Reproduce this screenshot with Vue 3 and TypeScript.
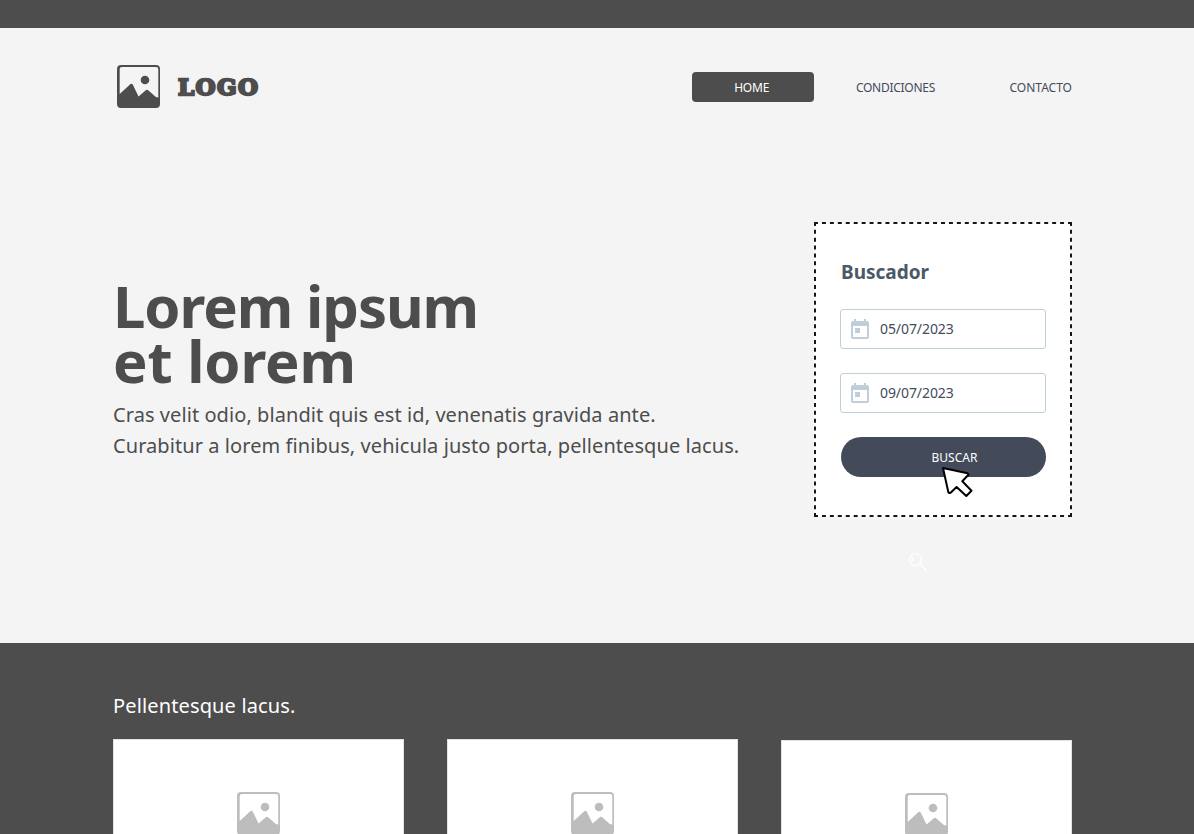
<script setup lang="ts">
interface NavItem { label: string; cls: string }
interface DateField { id: string; value: string }

const nav: NavItem[] = [
  { label: 'HOME', cls: 'home' },
  { label: 'CONDICIONES', cls: 'terms' },
  { label: 'CONTACTO', cls: 'contact' },
]
const dates: DateField[] = [
  { id: 'from', value: '05/07/2023' },
  { id: 'to', value: '09/07/2023' },
]
const cards: number[] = [1, 2, 3]
const picture =
  'M4 0H39Q43 0 43 4V39Q43 43 39 43H4Q0 43 0 39V4Q0 0 4 0ZM5 2Q2.700 2 2.700 4V29L13.500 19Q15 18 16 20L21.500 31.500L28.500 25.500Q30 24 31.500 25.500L38.500 31.700Q39.500 32.500 41.300 32.500V4Q41.300 2 39 2Z'
</script>

<template>
  <div class="page">
    <div class="topbar"></div>
    <section class="hero">
      <header class="header">
        <div class="brand">
          <svg class="picture" viewBox="0 0 43 43"><path :d="picture" fill-rule="evenodd" /><circle cx="28" cy="15" r="4.300" /></svg>
          <span class="brand-name">LOGO</span>
        </div>
        <nav class="nav">
          <a v-for="item in nav" :key="item.label" :class="['nav-item', item.cls]"><span>{{ item.label }}</span></a>
        </nav>
      </header>
      <div class="hero-body">
        <div class="intro">
          <h1><span class="h-one">Lorem ipsum</span><span class="h-two">et lorem</span></h1>
          <p><span>Cras velit odio, blandit quis est id, venenatis gravida ante.</span><span>Curabitur a lorem finibus, vehicula justo porta, pellentesque lacus.</span></p>
        </div>
        <div class="search">
          <svg class="outline" viewBox="0 0 258 295">
            <path class="across" d="M0 1H258M0 294H258" />
            <path class="down" d="M1 0V295M257 0V295" />
          </svg>
          <h2>Buscador</h2>
          <div v-for="d in dates" :key="d.id" class="field">
            <svg class="calendar" viewBox="0 0 18 20"><path fill-rule="evenodd" d="M3 0H5V2H13V0H15V2H16Q18 2 18 4V18Q18 20 16 20H2Q0 20 0 18V4Q0 2 2 2H3ZM2 7V18H16V7ZM4 9H9V14H4Z" /></svg>
            <span>{{ d.value }}</span>
          </div>
          <button class="submit"><span>BUSCAR</span></button>
          <svg class="cursor" viewBox="0 0 32 32"><path d="M2 2L26.500 7.300Q28 8 27 9.300L21.300 15.300L30.500 24.700L25.300 30L15.600 21L9.600 26.700Q8 27.700 7.300 26Z" /></svg>
          <svg class="magnifier" viewBox="0 0 20 20"><circle cx="7.500" cy="7.500" r="6" /><path d="M12 12L19 19M5 5Q3.500 7.500 5 9" /></svg>
        </div>
      </div>
    </section>
    <section class="listing">
      <h3>Pellentesque lacus.</h3>
      <div class="cards">
        <article v-for="c in cards" :key="c" class="card">
          <svg class="picture" viewBox="0 0 43 43"><path :d="picture" fill-rule="evenodd" /><circle cx="28" cy="15" r="4.300" /></svg>
        </article>
      </div>
    </section>
  </div>
</template>

<style>
body { margin: 0; overflow: hidden; }
</style>

<style scoped>
* { box-sizing: border-box; }
.page { width: 1194px; height: 834px; overflow: hidden; display: flex; flex-direction: column; background: #f4f4f4; color: #4d4d4d; font-family: "Noto Sans", "Open Sans", sans-serif; }
h1, h2, h3, p { margin: 0; font-weight: 400; }
span { white-space: nowrap; }
.topbar { height: 28px; background: #4d4d4d; }
.hero { height: 615px; padding: 37px 122px 0 113px; }
.header { height: 43px; display: flex; justify-content: space-between; align-items: center; }
.brand { display: flex; align-items: center; gap: 18px; padding-left: 4px; }
.picture { width: 43px; height: 43px; fill: #4d4d4d; flex: none; }
.brand-name { padding-top: 1px; font: 700 23px/30px "DejaVu Serif", serif; letter-spacing: 1.4px; -webkit-text-stroke: 2.3px #4d4d4d; }
.nav { display: flex; align-items: center; font-size: 12px; line-height: 30px; color: #434b5a; }
.nav-item { height: 30px; padding-top: 1px; }
.home { width: 122.5px; padding-right: 3px; margin: 1px 41.5px 0 0; line-height: 29px; border-radius: 4px; background: #4d4d4d; color: #fff; text-align: center; letter-spacing: -0.2px; }
.terms { margin-right: 74.5px; letter-spacing: -0.27px; }
.hero-body { display: flex; justify-content: space-between; margin-top: 114px; }
.intro { padding-top: 56px; }
h1 { font-size: 58px; line-height: 55px; font-weight: 700; }
h1 span, p span { display: block; }
.h-one { letter-spacing: -1.1px; }
.h-two { letter-spacing: -0.2px; }
p { margin-top: 11px; font-size: 20px; line-height: 31px; letter-spacing: 0.07px; }
.search { position: relative; width: 258px; height: 295px; padding: 37px 26px 0; background: #fff; }
.outline { position: absolute; inset: 0; width: 258px; height: 295px; fill: none; stroke: #171717; stroke-width: 2; }
.across { stroke-dasharray: 4 3.9375; }
.down { stroke-dasharray: 4 3.865; }
h2 { height: 27px; margin: 0 0 23px 1px; font-size: 19px; line-height: 27px; font-weight: 700; color: #4b5967; }
.field { width: 206px; height: 40px; margin-bottom: 24px; padding-left: 10px; display: flex; align-items: center; gap: 11px; border: 1px solid #bfcfd9; border-radius: 3px; font-size: 14px; color: #434b5a; }
.field span { padding-bottom: 2px; letter-spacing: -0.08px; }
.calendar { width: 18px; height: 20px; fill: #bfcfd9; }
.submit { display: block; width: 205px; height: 40px; margin-left: 1px; padding: 0 0 0 22px; border: 0; border-radius: 20px; background: #434b5a; color: #fff; font-family: inherit; font-size: 12px; }
.cursor { position: absolute; left: 127px; top: 244px; width: 32px; height: 32px; fill: #fff; stroke: #000; stroke-width: 2; stroke-linejoin: round; }
.magnifier { position: absolute; left: 94px; top: 330px; width: 20px; height: 20px; fill: none; stroke: #fff; stroke-width: 1.2; }
.listing { height: 191px; padding: 47px 122px 0 113px; background: #4d4d4d; overflow: hidden; }
h3 { font-size: 20px; line-height: 31px; letter-spacing: 0.14px; color: #fff; }
.cards { display: flex; justify-content: space-between; margin-top: 18px; }
.card { width: 291px; height: 240px; padding-top: 52px; display: flex; justify-content: center; align-items: flex-start; background: #fff; border: 1px solid #e3e3e3; }
.card:last-child { margin-top: 1px; }
.card .picture { fill: #bdbdbd; }
</style>
